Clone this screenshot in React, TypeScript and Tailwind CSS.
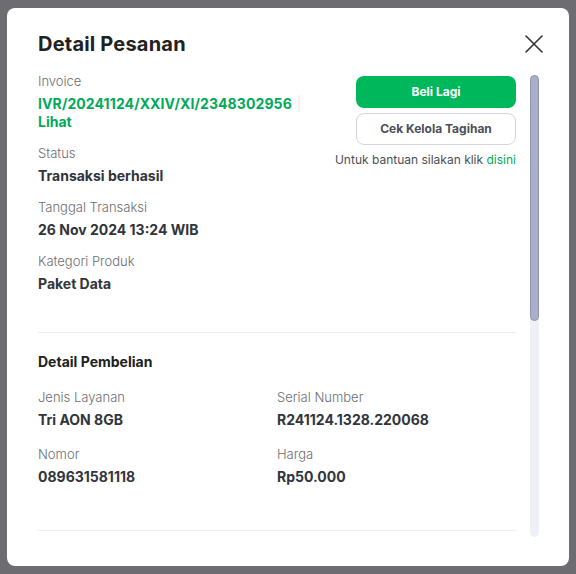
import React from 'react';

const Field: React.FC<{ label: string; children: React.ReactNode }> = ({ label, children }) => (
  <div className="flex flex-col">
    <span className="text-[13px] leading-[18px] font-light text-[#6b6d72]">{label}</span>
    <div className="mt-[5px] text-[14px] leading-[18px] font-bold text-[#31353b]">{children}</div>
  </div>
);

const App: React.FC = () => {
  const summary = [
    { label: 'Status', value: 'Transaksi berhasil' },
    { label: 'Tanggal Transaksi', value: '26 Nov 2024 13:24 WIB' },
    { label: 'Kategori Produk', value: 'Paket Data' },
  ];

  const purchase = [
    { label: 'Jenis Layanan', value: 'Tri AON 8GB' },
    { label: 'Serial Number', value: 'R241124.1328.220068' },
    { label: 'Nomor', value: '089631581118' },
    { label: 'Harga', value: 'Rp50.000' },
  ];

  return (
    <div className="w-full h-[574px] bg-[#6c6c71] pl-[7px] pt-[8px] font-['Inter',sans-serif]">
      <div className="w-[562px] h-[558px] bg-white rounded-lg flex flex-col pl-[31px] pr-[30px] pt-[22px] pb-[29px]">
        {/* Header */}
        <div className="flex items-center justify-between h-[28px]">
          <h1 className="text-[20px] leading-[28px] font-bold tracking-[0.2px] text-[#212121]">Detail Pesanan</h1>
          <button className="-mr-[4px] w-[18px] h-[18px] text-[#2e3137]">
            <svg viewBox="0 0 18 18" width="18" height="18" fill="none" stroke="currentColor" strokeWidth="1.6" strokeLinecap="round">
              <path d="M1 1L17 17M17 1L1 17" />
            </svg>
          </button>
        </div>

        {/* Body + scrollbar */}
        <div className="mt-[14px] flex-1 min-h-0 flex gap-[14px]">
          <div className="flex-1 min-w-0 overflow-hidden">
            <div className="flex justify-between">
              <div className="flex flex-col gap-[13px]">
                <Field label="Invoice">
                  <span className="text-[#00aa5b] tracking-[0.1px]">IVR/20241124/XXIV/XI/2348302956</span>
                  <span className="ml-[5px] font-light text-[#e3e4e8]">|</span>
                  <span className="block text-[#00aa5b]">Lihat</span>
                </Field>
                {summary.map((item) => (
                  <Field key={item.label} label={item.label}>
                    {item.value}
                  </Field>
                ))}
              </div>

              <div className="w-[160px] pt-[4px] flex flex-col items-end">
                <button className="w-full h-8 rounded-lg bg-[#00b85c] text-white text-[12px] font-bold">Beli Lagi</button>
                <button className="w-full mt-[5px] h-8 rounded-lg border border-[#d3d6dd] text-[#4b4f57] text-[12px] font-bold">
                  Cek Kelola Tagihan
                </button>
                <p className="mt-[6px] w-[200px] text-[12px] leading-[18px] text-[#4b4f57] text-right whitespace-nowrap">
                  Untuk bantuan silakan klik <span className="text-[#00aa5b]">disini</span>
                </p>
              </div>
            </div>

            {/* Detail Pembelian */}
            <div className="mt-[39px] border-t border-[#eeeff2] pt-[19px]">
              <h2 className="text-[14px] leading-5 font-bold text-[#212121]">Detail Pembelian</h2>
              <div className="mt-[16px] grid grid-cols-2 gap-y-[16px]">
                {purchase.map((item) => (
                  <Field key={item.label} label={item.label}>
                    {item.value}
                  </Field>
                ))}
              </div>
            </div>

            <div className="mt-[44px] border-t border-[#eeeff2]" />
          </div>

          {/* Scrollbar */}
          <div className="w-[9px] mt-[3px] rounded-full bg-[#eef0f6] flex flex-col">
            <div className="h-[246px] rounded-full bg-[#aab0c9] border border-[#8f95ae]" />
          </div>
        </div>
      </div>
    </div>
  );
};

export default App;
